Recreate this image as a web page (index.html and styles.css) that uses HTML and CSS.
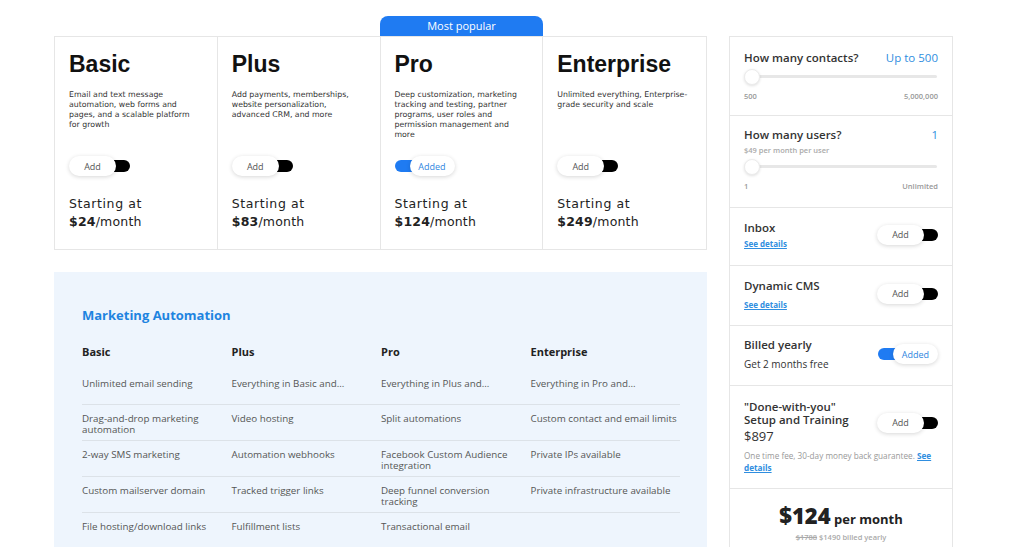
FILE: index.html
```html
<!DOCTYPE html>
<html>
<head>
<meta charset="utf-8">
<link rel="stylesheet" href="styles.css">
</head>
<body>
<div class="page">
  <div class="main">
    <div class="tabrow"><div class="tab-spacer"></div><div class="tab-spacer"></div><div class="popular">Most popular</div></div>
    <div class="plans">
      <div class="plan">
        <h2 class="plan-title">Basic</h2>
        <p class="plan-desc">Email and text message automation, web forms and pages, and a scalable platform for growth</p>
        <div class="toggle off"><span class="pill">Add</span><span class="knob"></span></div>
        <div class="start">Starting at</div>
        <div class="price"><b>$24</b>/month</div>
      </div>
      <div class="plan">
        <h2 class="plan-title">Plus</h2>
        <p class="plan-desc">Add payments, memberships, website personalization, advanced CRM, and more</p>
        <div class="toggle off"><span class="pill">Add</span><span class="knob"></span></div>
        <div class="start">Starting at</div>
        <div class="price"><b>$83</b>/month</div>
      </div>
      <div class="plan">
        <h2 class="plan-title">Pro</h2>
        <p class="plan-desc">Deep customization, marketing tracking and testing, partner programs, user roles and permission management and more</p>
        <div class="toggle on"><span class="knob"></span><span class="pill">Added</span></div>
        <div class="start">Starting at</div>
        <div class="price"><b>$124</b>/month</div>
      </div>
      <div class="plan">
        <h2 class="plan-title">Enterprise</h2>
        <p class="plan-desc">Unlimited everything, Enterprise-grade security and scale</p>
        <div class="toggle off"><span class="pill">Add</span><span class="knob"></span></div>
        <div class="start">Starting at</div>
        <div class="price"><b>$249</b>/month</div>
      </div>
    </div>

    <div class="features">
      <h3 class="feat-title">Marketing Automation</h3>
      <div class="feat-head">
        <div>Basic</div><div>Plus</div><div>Pro</div><div>Enterprise</div>
      </div>
      <div class="feat-row">
        <div>Unlimited email sending</div><div>Everything in Basic and...</div><div>Everything in Plus and...</div><div>Everything in Pro and...</div>
      </div>
      <div class="feat-row">
        <div>Drag-and-drop marketing automation</div><div>Video hosting</div><div>Split automations</div><div>Custom contact and email limits</div>
      </div>
      <div class="feat-row">
        <div>2-way SMS marketing</div><div>Automation webhooks</div><div>Facebook Custom Audience integration</div><div>Private IPs available</div>
      </div>
      <div class="feat-row">
        <div>Custom mailserver domain</div><div>Tracked trigger links</div><div>Deep funnel conversion tracking</div><div>Private infrastructure available</div>
      </div>
      <div class="feat-row last">
        <div>File hosting/download links</div><div>Fulfillment lists</div><div>Transactional email</div><div></div>
      </div>
    </div>
  </div>

  <aside class="side">
    <div class="sec sec-slider">
      <div class="sec-top"><span class="sec-title">How many contacts?</span><span class="sec-value">Up to 500</span></div>
      <div class="slider"><span class="thumb"></span></div>
      <div class="range"><span>500</span><span>5,000,000</span></div>
    </div>
    <div class="sec sec-slider users">
      <div class="sec-top"><span class="sec-title">How many users?</span><span class="sec-value">1</span></div>
      <div class="sec-sub">$49 per month per user</div>
      <div class="slider"><span class="thumb"></span></div>
      <div class="range"><span>1</span><span>Unlimited</span></div>
    </div>
    <div class="sec sec-addon">
      <div class="addon-text">
        <div class="sec-title">Inbox</div>
        <a class="details">See details</a>
      </div>
      <div class="toggle off"><span class="pill">Add</span><span class="knob"></span></div>
    </div>
    <div class="sec sec-addon cms">
      <div class="addon-text">
        <div class="sec-title">Dynamic CMS</div>
        <a class="details">See details</a>
      </div>
      <div class="toggle off"><span class="pill">Add</span><span class="knob"></span></div>
    </div>
    <div class="sec sec-addon billed">
      <div class="addon-text">
        <div class="sec-title">Billed yearly</div>
        <div class="free">Get 2 months free</div>
      </div>
      <div class="toggle on"><span class="knob"></span><span class="pill">Added</span></div>
    </div>
    <div class="sec sec-setup">
      <div class="setup-row">
        <div class="addon-text">
          <div class="sec-title">"Done-with-you"<br>Setup and Training</div>
          <div class="setup-price">$897</div>
        </div>
        <div class="toggle off"><span class="pill">Add</span><span class="knob"></span></div>
      </div>
      <p class="note">One time fee, 30-day money back guarantee. <a class="details">See details</a></p>
    </div>
    <div class="sec total">
      <div class="total-price"><b>$124</b> per month</div>
      <div class="total-sub"><s>$1788</s> $1490 billed yearly</div>
    </div>
  </aside>
</div>
</body>
</html>
```

FILE: styles.css
```css
* { box-sizing: border-box; }
html, body { margin: 0; padding: 0; background: #fff; }
body { font-family: "Open Sans", "DejaVu Sans", sans-serif; color: #333; overflow: hidden; height: 547px; }

.page { display: flex; gap: 22px; padding: 16px 0 0 54px; align-items: flex-start; }
.main { width: 653px; }

.tabrow { display: flex; height: 20px; }
.tab-spacer { width: 163px; }
.popular {
  width: 163px; height: 20px; background: #1f7bf2; color: #fff;
  border-radius: 8px 8px 0 0; font-size: 11px; line-height: 20px; text-align: center;
}

.plans { display: flex; border: 1px solid #e6e6e6; height: 214px; }
.plan { width: 163px; padding: 14px 13px 0 13px; border-right: 1px solid #e6e6e6; display: flex; flex-direction: column; }
.plan:last-child { border-right: 0; }
.plan-title { margin: 0 0 0 1px; font-family: "Liberation Sans", Arial, sans-serif; font-weight: 700; font-size: 23px; line-height: 26px; color: #111; }
.plan-desc { margin: 13px 0 0 1px; width: 133px; height: 66px; font-family: "DejaVu Sans", sans-serif; font-size: 7.8px; line-height: 10px; color: #333; }
.toggle { display: flex; align-items: center; height: 20px; flex: none; }
.pill {
  width: 47px; height: 20px; border-radius: 10px; background: #fff;
  box-shadow: 0 1px 4px rgba(0,0,0,0.16); display: flex; align-items: center; justify-content: center;
  font-family: "Open Sans", sans-serif; font-size: 9px; color: #555; position: relative; z-index: 1;
}
.toggle .knob { width: 16px; height: 12px; background: #000; border-radius: 0 6px 6px 0; margin-left: -2px; }
.toggle.on .knob { background: #1f7bf2; width: 18px; border-radius: 6px 0 0 6px; margin-left: 0; }
.toggle.on .pill { width: 45px; margin-left: -3px; color: #2f86e0; }
.plan .toggle { margin-left: 1px; }
.start { margin: 20px 0 0 1px; font-family: "DejaVu Sans", sans-serif; font-size: 12.5px; line-height: 16px; color: #222; letter-spacing: 0.6px; }
.price { margin: 1px 0 0 1px; font-family: "DejaVu Sans", sans-serif; font-size: 12.5px; line-height: 17px; color: #222; letter-spacing: 0.2px; }
.price b { font-weight: 700; }

.features { margin-top: 22px; background: #eef5fd; padding: 34px 27px 10px 28px; height: 290px; }
.feat-title { margin: 0; font-size: 13px; line-height: 18px; font-weight: 700; color: #1e84e0; }
.feat-head { display: grid; grid-template-columns: repeat(4, 1fr); margin-top: 21px; font-size: 11px; line-height: 14px; font-weight: 700; color: #222; }
.feat-row { display: grid; grid-template-columns: repeat(4, 1fr); height: 36px; padding-top: 8px; border-bottom: 1px solid #dce2e8; font-size: 9.8px; line-height: 11px; color: #555; }
.feat-head + .feat-row { margin-top: 11px; height: 35px; }
.feat-row > div { padding-right: 6px; }
.feat-row > div:last-child { padding-right: 0; }
.feat-row.last { border-bottom: 0; }

.side { width: 224px; border: 1px solid #e6e6e6; border-bottom: 0; margin-top: 20px; height: 540px; }
.sec { border-bottom: 1px solid #e6e6e6; padding: 0 14px; }
.sec-title { font-size: 11.5px; line-height: 16px; font-weight: 600; color: #333; }
.sec-top { display: flex; justify-content: space-between; align-items: center; }
.sec-value { font-size: 11.5px; line-height: 16px; color: #2f8ee0; font-weight: 500; }
.sec-slider { height: 79px; padding-top: 13px; }
.sec-slider.users { height: 92px; padding-top: 11px; }
.sec-sub { font-size: 7.5px; line-height: 10px; color: #aaa; font-weight: 600; margin-top: 2px; }
.slider { position: relative; height: 16px; margin-top: 3px; }
.users .slider { margin-top: 4px; }
.slider::before { content: ""; position: absolute; left: 8px; right: 1px; top: 6px; height: 3px; background: #e7e7e7; border-radius: 2px; }
.thumb { position: absolute; left: 0; top: 0; width: 16px; height: 16px; border-radius: 50%; background: #fff; border: 1px solid #ececec; box-shadow: 0 1px 3px rgba(0,0,0,0.12); }
.range { display: flex; justify-content: space-between; margin-top: 6px; font-size: 7.5px; line-height: 10px; color: #999; font-weight: 600; }
.users .range { margin-top: 6px; }

.sec-addon { display: flex; justify-content: space-between; align-items: center; height: 58px; padding-bottom: 4px; }
.sec-addon.cms { height: 60px; padding-bottom: 4px; }
.sec-addon.billed { height: 60px; padding-bottom: 3px; }
.addon-text { display: flex; flex-direction: column; }
.details { font-size: 8px; line-height: 11px; font-weight: 700; color: #2f8ee0; text-decoration: underline; margin-top: 2px; }
.cms .details { margin-top: 5px; }
.free { font-size: 10px; line-height: 14px; color: #333; margin-top: 4px; }
.sec-setup { height: 103px; padding-top: 14px; }
.setup-row { display: flex; justify-content: space-between; align-items: center; }
.sec-setup .sec-title { line-height: 13px; }
.setup-price { font-size: 13px; line-height: 18px; color: #333; font-weight: 500; margin-top: 1px; }
.note { margin: 5px 0 0; font-size: 8.2px; line-height: 12px; color: #999; }
.note .details { font-size: 8.2px; line-height: 12px; margin: 0; }
.total { border-bottom: 0; text-align: center; padding-top: 13px; }
.total-price { font-size: 13px; font-weight: 700; color: #222; line-height: 26px; }
.total-price b { font-size: 22px; font-weight: 800; }
.total-sub { font-size: 7.5px; color: #aaa; font-weight: 600; line-height: 10px; margin-top: 0; }
```
